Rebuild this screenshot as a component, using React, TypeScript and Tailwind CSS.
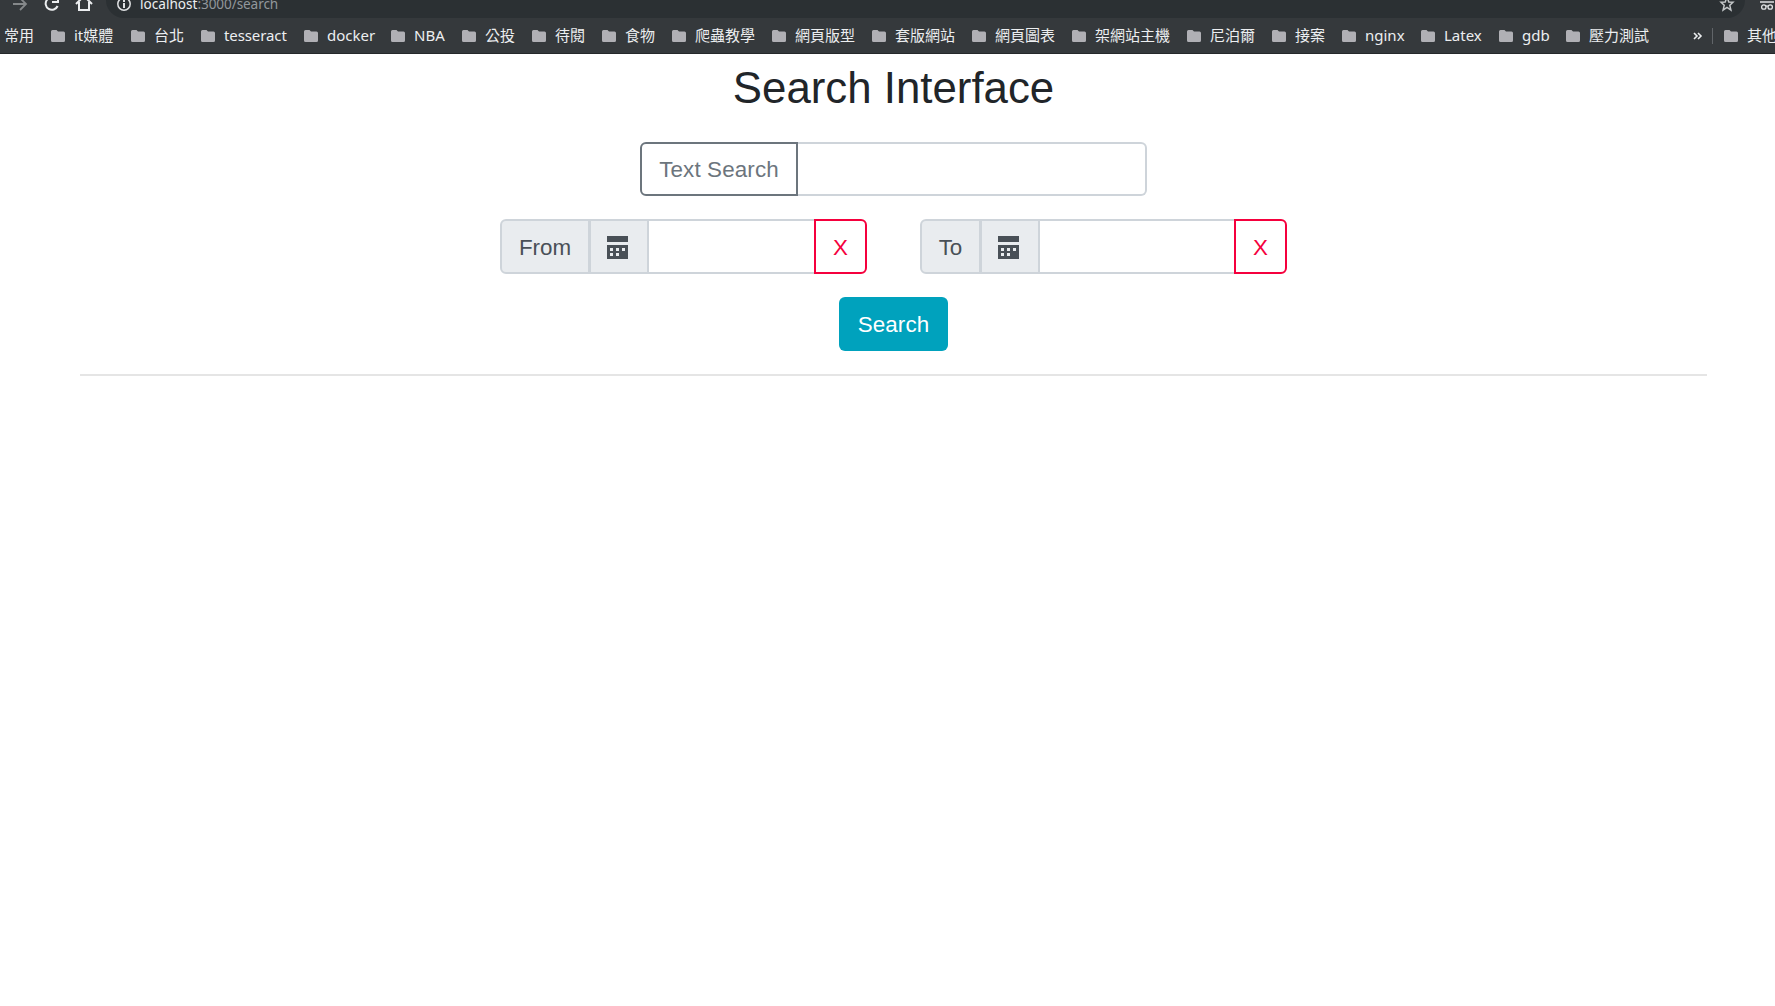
import React from 'react';

const bookmarks = [
  { label: 'it媒體', w: 'w-[80px]' },
  { label: '台北', w: 'w-[70px]' },
  { label: 'tesseract', w: 'w-[103px]', t: 'tracking-[-0.1px]' },
  { label: 'docker', w: 'w-[87px]' },
  { label: 'NBA', w: 'w-[71px]' },
  { label: '公投', w: 'w-[70px]' },
  { label: '待閱', w: 'w-[70px]' },
  { label: '食物', w: 'w-[70px]' },
  { label: '爬蟲教學', w: 'w-[100px]' },
  { label: '網頁版型', w: 'w-[100px]' },
  { label: '套版網站', w: 'w-[100px]' },
  { label: '網頁圖表', w: 'w-[100px]' },
  { label: '架網站主機', w: 'w-[115px]' },
  { label: '尼泊爾', w: 'w-[85px]' },
  { label: '接案', w: 'w-[70px]' },
  { label: 'nginx', w: 'w-[79px]' },
  { label: 'Latex', w: 'w-[78px]' },
  { label: 'gdb', w: 'w-[67px]' },
  { label: '壓力測試', w: 'w-[127px]' },
];

function Folder() {
  return (
    <svg className="mr-[9px] h-3 w-[14px] shrink-0" viewBox="0 0 14 12" fill="#b0b0b5">
      <path d="M1.5 0H5.5L7 1.5H12.5Q14 1.5 14 3V10.5Q14 12 12.5 12H1.5Q0 12 0 10.5V1.5Q0 0 1.5 0Z" />
    </svg>
  );
}

function Browser() {
  return (
    <header className="h-[54px] overflow-hidden border-b border-[#25282a] bg-[#35393c] font-['Noto_Sans','Noto_Sans_CJK_TC',sans-serif] text-[#eceef0]">
      <div className="flex h-[18px] items-start">
        <svg className="h-[18px] w-[106px] shrink-0" viewBox="0 0 106 18" fill="none" strokeWidth="2">
          <path d="M13 4H26M20 -2L26 4L20 10" stroke="#85888a" strokeWidth="1.8" />
          <path d="M57.6 6A6.2 6.2 0 1 1 56.5 -0.5" stroke="#eceef0" />
          <path d="M59 -4V3H52V1H57V-4Z" fill="#eceef0" />
          <path d="M76 4L84 -4L92 4M79 2V10H89V2" stroke="#eceef0" />
        </svg>
        <div className="flex h-[18px] flex-1 items-start overflow-hidden rounded-bl-[18px] rounded-br-[18px] bg-[#2b3033] pl-[10px]">
          <svg className="mr-[8px] h-3 w-4 shrink-0" viewBox="0 0 16 12" fill="none" stroke="#dfe1e3">
            <circle cx="8" cy="4" r="6.2" strokeWidth="1.5" />
            <path d="M8 3V8M8 0V2" strokeWidth="2" />
          </svg>
          <div className="-mt-[6px] whitespace-nowrap text-[13.6px] leading-5">
            localhost<span className="tracking-[-0.1px] text-[#92979b]">:3000/search</span>
          </div>
          <svg className="ml-auto mr-[10px] h-3 w-4 shrink-0" viewBox="0 0 16 12" fill="none" stroke="#c5c8ca" strokeWidth="1.5">
            <path d="M8 -3L9.8 2L14 2.2L10.8 5.3L11.9 10L8 7.3L4.1 10L5.2 5.3L2 2.2L6.2 2Z" />
          </svg>
        </div>
        <svg className="h-[18px] w-[30px] shrink-0" viewBox="0 0 30 18" fill="none" stroke="#dfe1e3" strokeWidth="1.3">
          <path d="M15 2H29" strokeWidth="1.5" />
          <path d="M21 6.3Q22 5.7 23 6.3" />
          <circle cx="18.8" cy="7" r="2.2" />
          <circle cx="25.2" cy="7" r="2.2" />
        </svg>
      </div>
      <div className="flex h-[35px] items-center whitespace-nowrap text-[15px] leading-5">
        <span className="mb-[2px] w-[46px] shrink-0 pl-[4px]">常用</span>
        <span className="w-[5px] shrink-0" />
        {bookmarks.map((b) => (
          <div key={b.label} className={`flex shrink-0 items-center ${b.w}`}>
            <Folder />
            <span className={`mb-[2px] ${b.t ?? ''}`}>{b.label}</span>
          </div>
        ))}
        <svg className="h-[10px] w-[10px] shrink-0" viewBox="0 0 10 10" fill="none" stroke="#eceef0" strokeWidth="1.6">
          <path d="M1 2L4 5L1 8M5 2L8 5L5 8" />
        </svg>
        <span className="ml-[9px] mr-[11px] h-4 w-px shrink-0 bg-[#616569]" />
        <Folder />
        <span className="mb-[2px]">其他</span>
      </div>
    </header>
  );
}

function Calendar() {
  return (
    <svg className="mr-[3px] mt-[2px] h-[23px] w-[21px]" viewBox="0 0 21 23" fill="#495057">
      <path fillRule="evenodd" d="M0 0H21V6H0ZM0 9H21V23H0ZM3 12V15H6V12ZM9 12V15H12V12ZM15 12V15H18V12ZM3 17V20H6V17ZM9 17V20H12V17Z" />
    </svg>
  );
}

function DateField({ label, labelWidth }: { label: string; labelWidth: string }) {
  return (
    <div className="flex h-[55px] w-[367px]">
      <span className={`flex shrink-0 items-center justify-center rounded-l-[6px] border-2 border-[#ced4da] bg-[#e9ecef] pt-[2px] text-[#495057] ${labelWidth}`}>{label}</span>
      <button className="-ml-px flex w-[60px] shrink-0 items-center justify-center border-2 border-[#ced4da] bg-[#e9ecef]" aria-label={`${label} calendar`}>
        <Calendar />
      </button>
      <input className="min-w-0 flex-1 border-y-2 border-[#ced4da] bg-white outline-none" aria-label={label} />
      <button className="w-[53px] shrink-0 rounded-r-[6px] border-2 border-[#f5003d] pt-[2px] text-[#f5003d]">X</button>
    </div>
  );
}

export default function App() {
  return (
    <div className="h-[1006px] w-[1775px] overflow-hidden bg-white">
      <Browser />
      <main className="flex flex-col items-center pl-[12px] font-['Liberation_Sans',sans-serif] text-[22.4px] leading-[33.6px]">
        <h1 className="mt-[7px] h-[54px] text-[43.8px] leading-[53px] text-[#212529]">Search Interface</h1>
        <div className="mt-[27px] flex h-[54px] w-[507px]">
          <button className="w-[158px] shrink-0 rounded-l-[6px] border-2 border-[#6c757d] pt-[2px] tracking-[0.13px] text-[#6c757d]">Text Search</button>
          <input className="min-w-0 flex-1 rounded-r-[6px] border-2 border-l-0 border-[#ced4da] outline-none" aria-label="Text search" />
        </div>
        <div className="mt-[23px] flex gap-[53px]">
          <DateField label="From" labelWidth="w-[90px]" />
          <DateField label="To" labelWidth="w-[61px]" />
        </div>
        <button className="mt-[23px] h-[54px] w-[109px] rounded-[6px] bg-[#00a2bd] pt-[2px] tracking-[0.13px] text-white">Search</button>
        <hr className="mt-[23px] w-[1627px] border-t-2 border-[#e5e5e5]" />
      </main>
    </div>
  );
}
